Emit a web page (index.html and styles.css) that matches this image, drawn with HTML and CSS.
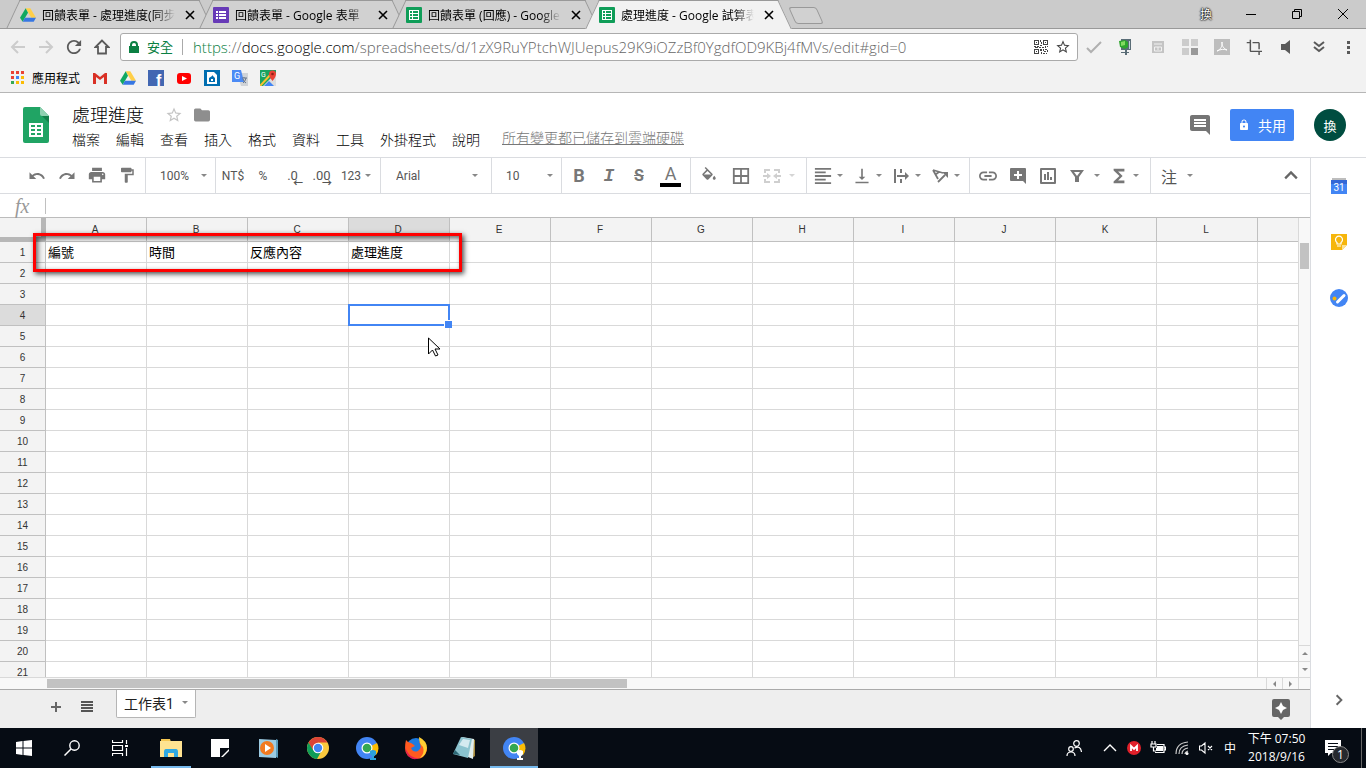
FILE: index.html
```html
<!DOCTYPE html>
<html lang="zh-Hant">
<head>
    <meta charset="UTF-8">
    <meta name="viewport" content="width=device-width, initial-scale=1.0">
    <title>處理進度 - Google 試算表</title>
    <link rel="stylesheet" href="styles.css">
</head>
<body>

<!-- shared icons -->
<svg class="sprite" aria-hidden="true">
    <symbol id="drive" viewBox="0 0 24 24">
        <path fill="#ffcf48" d="M8.5 2h7L24 16h-7z"/>
        <path fill="#11a861" d="M8.5 2L12 8.5 4 22 0 16z"/>
        <path fill="#3777e3" d="M7.5 16H24l-3.5 6H4z"/>
    </symbol>
    <symbol id="sheet" viewBox="0 0 16 16">
        <rect width="16" height="16" rx="1" fill="#0f9d58"/>
        <path fill="#fff" fill-rule="evenodd" d="M3 3h10v10H3zM4 4v2h2V4zm3 0v2h5V4zM4 7v2h2V7zm3 0v2h5V7zm-3 3v2h2v-2zm3 0v2h5v-2z"/>
    </symbol>
    <symbol id="form" viewBox="0 0 16 16">
        <rect width="16" height="16" rx="1" fill="#673ab7"/>
        <path fill="#fff" d="M3 4h2v2H3zm3 0h7v2H6zM3 7h2v2H3zm3 0h7v2H6zm-3 3h2v2H3zm3 0h7v2H6z"/>
    </symbol>
    <symbol id="close" viewBox="0 0 10 10">
        <path d="M1 1l8 8M9 1L1 9" stroke="currentColor" stroke-width="1.6"/>
    </symbol>
    <symbol id="star" viewBox="0 0 24 24">
        <path fill="currentColor" d="M22 9.24l-7.19-.62L12 2 9.19 8.63 2 9.24l5.46 4.73L5.82 21 12 17.27 18.18 21l-1.63-7.03L22 9.24zM12 15.4l-3.76 2.27 1-4.28-3.32-2.88 4.38-.38L12 6.1l1.71 4.04 4.38.38-3.32 2.88 1 4.28L12 15.4z"/>
    </symbol>
    <symbol id="lock" viewBox="0 0 24 24">
        <path fill="currentColor" fill-rule="evenodd" d="M18 8h-1V6c0-2.76-2.24-5-5-5S7 3.24 7 6v2H6c-1.1 0-2 .9-2 2v10c0 1.1.9 2 2 2h12c1.1 0 2-.9 2-2V10c0-1.1-.9-2-2-2zm-6 9c-1.1 0-2-.9-2-2s.9-2 2-2 2 .9 2 2-.9 2-2 2zm3.1-9H8.900V6c0-1.710 1.390-3.100 3.100-3.100s3.100 1.390 3.100 3.100z"/>
    </symbol>
    <symbol id="solid-lock" viewBox="0 0 12 12">
        <path fill="currentColor" fill-rule="evenodd" d="M2 5V4a4 4 0 0 1 8 0v1h1v7H1V5zm2 0h4V4a2 2 0 0 0-4 0z"/>
    </symbol>
    <symbol id="profile-chrome" viewBox="0 0 24 24">
        <circle cx="12" cy="12" r="11" fill="#4285f4"/>
        <path fill="#fbbc05" d="M12 12l10-5a11 11 0 0 1-1 12z"/>
        <circle cx="12" cy="12" r="5.5" fill="#fff"/>
        <circle cx="12" cy="12" r="4.3" fill="#34a853"/>
        <path fill="currentColor" d="M15 15q3-2 6 0v3q-1 2-2 2v2h2v2h-6v-2h2v-2q-1-1-2-2z"/>
    </symbol>
</svg>

<div class="tabstrip">
    <div class="tab">
        <svg class="favicon"><use href="#drive"/></svg>
        <span class="tab-title">回饋表單 - 處理進度(同步)</span>
        <button class="tab-close" aria-label="關閉分頁"><svg><use href="#close"/></svg></button>
    </div>
    <div class="tab">
        <svg class="favicon"><use href="#form"/></svg>
        <span class="tab-title">回饋表單 - Google 表單</span>
        <button class="tab-close" aria-label="關閉分頁"><svg><use href="#close"/></svg></button>
    </div>
    <div class="tab">
        <svg class="favicon"><use href="#sheet"/></svg>
        <span class="tab-title">回饋表單 (回應) - Google 試算表</span>
        <button class="tab-close" aria-label="關閉分頁"><svg><use href="#close"/></svg></button>
    </div>
    <div class="tab active">
        <svg class="favicon"><use href="#sheet"/></svg>
        <span class="tab-title">處理進度 - Google 試算表</span>
        <button class="tab-close" aria-label="關閉分頁"><svg><use href="#close"/></svg></button>
    </div>
    <button class="new-tab" aria-label="新增分頁"></button>
    <div class="window-buttons">
        <span class="profile">換</span>
        <button aria-label="最小化"><svg viewBox="0 0 10 10"><path d="M0 5.500h10" stroke="#000"/></svg></button>
        <button aria-label="還原"><svg viewBox="0 0 10 10"><path d="M.5 2.500h7v7h-7zM2.500 2.500v-2h7v7h-2" fill="none" stroke="#000"/></svg></button>
        <button aria-label="關閉"><svg viewBox="0 0 10 10"><path d="M0 0l10 10M10 0L0 10" stroke="#000"/></svg></button>
    </div>
</div>

<div class="navbar">
    <div class="nav-buttons">
        <button class="off" aria-label="上一頁"><svg viewBox="0 0 16 16"><path d="M15 8H2M8 2L2 8l6 6" fill="none" stroke="currentColor" stroke-width="2"/></svg></button>
        <button class="off" aria-label="下一頁"><svg viewBox="0 0 16 16"><path d="M1 8h13M8 2l6 6-6 6" fill="none" stroke="currentColor" stroke-width="2"/></svg></button>
        <button aria-label="重新載入"><svg viewBox="3 3 18 18"><path fill="currentColor" d="M17.650 6.350C16.200 4.900 14.210 4 12 4c-4.420 0-7.990 3.580-7.990 8s3.570 8 7.990 8c3.730 0 6.840-2.550 7.730-6h-2.080c-.82 2.330-3.040 4-5.650 4-3.310 0-6-2.690-6-6s2.690-6 6-6c1.660 0 3.140.69 4.220 1.780L13 11h7V4z"/></svg></button>
        <button aria-label="首頁"><svg viewBox="0 0 16 16"><path d="M8 1.500L1.500 8H4v6.500h8V8h2.500z" fill="none" stroke="currentColor" stroke-width="1.800"/></svg></button>
    </div>
    <div class="omnibox">
        <svg class="url-lock"><use href="#solid-lock"/></svg>
        <span class="secure">安全</span>
        <span class="url"><span class="scheme">https</span>://<span class="host">docs.google.com</span>/spreadsheets/d/1zX9RuYPtchWJUepus29K9iOZzBf0YgdfOD9KBj4fMVs/edit#gid=0</span>
        <svg class="qr" viewBox="0 0 14 14"><path fill="#444" fill-rule="evenodd" d="M0 0h5v5H0zm1 1v3h3V1zM9 0h5v5H9zm1 1v3h3V1zM0 9h5v5H0zm1 1v3h3v-3zM2 2h1v1H2zm9 0h1v1h-1zm-9 9h1v1H2zM6 0h1v2H6zm1 2h1v2H7zM6 5h2v1H6zM0 6h2v1H0zm3 0h2v1H3zm2 1h2v1H5zm3 0h2v1H8zm3-1h1v2h-1zm2 0h1v1h-1zM1 8h3v-1H1zm5 1h2v2H6zm1 3h1v2H7zm2-3h1v2H9zm2 0h2v1h-2zm2 1h1v2h-1zm-3 1h2v1h-2zm-1 2h2v1H9zm3 0h1v1h-1z"/></svg>
        <button class="bookmark-star" aria-label="加入書籤"><svg><use href="#star"/></svg></button>
    </div>
    <div class="extensions">
        <svg viewBox="0 0 16 16"><path d="M1 9l4 4L15 3" fill="none" stroke="#b0b0b0" stroke-width="2"/></svg>
        <svg viewBox="0 0 16 16"><path fill="#5a6d77" d="M3 0h10v11H9v2h2v1H9v2H7v-2H3v-1h4v-2H3z"/><path fill="#2ea52d" d="M1 2l6-1 3 2v5l-3 2-5-2z"/><path fill="#83db61" d="M3 3l4-1v4L3 7z"/><path fill="#c2d2da" d="M11 2h1v8h-1z"/></svg>
        <svg viewBox="0 0 16 16"><path fill="#c4c4c4" d="M2 2h12v12H2z"/><path d="M4 5h8M4.500 8h7v4h-7zM8 8v3" fill="none" stroke="#f2f2f2"/></svg>
        <svg viewBox="0 0 16 16"><path fill="#ccc" d="M0 0h7v7H0zm9 0h7v7H9zM0 9h7v7H0z"/><path fill="#999" d="M9 9h7v7H9z"/></svg>
        <svg viewBox="0 0 16 16"><path fill="#bdbdbd" d="M0 0h16v16H0z"/><path d="M8 3c-1 3 2 7 5 8-3-1-6-1-10 1 3-1 6-5 5-9z" fill="none" stroke="#fff"/></svg>
        <svg viewBox="0 1 22 22"><path fill="#555" d="M17 15h2V7c0-1.100-.9-2-2-2H9v2h8zM7 17V2H5v3H1v2h4v10c0 1.100.9 2 2 2h10v4h2v-4h4v-2z"/></svg>
        <svg viewBox="0 0 16 16"><path fill="#5a5a5a" d="M3 5h4l5-4v14l-5-4H3z"/></svg>
        <svg viewBox="1 0 16 16"><path d="M5 3l5 4 5-4M5 8l5 4 5-4" fill="none" stroke="#5a5a5a" stroke-width="2"/></svg>
        <svg viewBox="0 0 16 16"><path fill="#5a5a5a" d="M5 2h3v3H5zm0 5h3v3H5zm0 5h3v3H5z"/></svg>
    </div>
</div>

<div class="bookmarks">
    <a href="#" class="apps"><svg viewBox="0 0 14 14"><path fill="#ea4335" d="M0 0h3v3H0zm5 0h3v3H5zm5 0h3v3h-3zM0 5h3v3H0z"/><path fill="#4285f4" d="M5 5h3v3H5z"/><path fill="#fbbc05" d="M10 5h3v3h-3zm-5 5h3v3H5zm5 0h3v3h-3z"/><path fill="#34a853" d="M0 10h3v3H0z"/></svg>應用程式</a>
    <a href="#" aria-label="Gmail"><svg viewBox="0 0 16 16"><path fill="#eee" d="M2 3h12v10H2z"/><path fill="#d93025" d="M1 3h2l5 4 5-4h2v11h-3V7L8 10 4 7v7H1z"/></svg></a>
    <a href="#" aria-label="雲端硬碟"><svg><use href="#drive"/></svg></a>
    <a href="#" aria-label="Facebook"><svg viewBox="0 0 16 16"><path fill="#4267b2" d="M0 0h16v16H0z"/><text x="8" y="16" fill="#fff" font-family="Liberation Sans" font-weight="bold" font-size="16">f</text></svg></a>
    <a href="#" aria-label="YouTube"><svg viewBox="0 0 16 16"><rect x="1" y="3" width="14" height="11" rx="3" fill="#f00"/><path fill="#fff" d="M6 6l5 2.500L6 11z"/></svg></a>
    <a href="#" aria-label="部落格"><svg viewBox="0 0 16 16"><path fill="#006eb0" d="M0 0h16v16H0z"/><path fill="#fff" d="M3 2h7l3 3v9H3z"/><path fill="#006eb0" d="M5 8l3-2V5l3 3v4H5zm2 1v2h2V9z"/></svg></a>
    <a href="#" aria-label="翻譯"><svg viewBox="0 0 16 16"><path fill="#d0d3d7" d="M5 3h11v13H9z"/><path fill="#4c8bf5" d="M0 0h9l3 12H0z"/><text x="2" y="9" fill="#fff" font-family="Roboto" font-size="9">G</text><path d="M10 8h5m-3-1v1m2 0q-1 4-3 5m0-4q1 3 3 4" fill="none" stroke="#67758a"/></svg></a>
    <a href="#" aria-label="地圖"><svg viewBox="0 0 16 16"><path fill="#1aa260" d="M0 0h16v16H0z"/><path fill="#ddd" d="M3 16L16 3v13z"/><path fill="#4285f4" d="M4 16l5-5 5 5z"/><path d="M0 16L12 3" stroke="#fbc02d" stroke-width="2"/><path fill="#ea4335" d="M9 4a3.500 3.500 0 0 1 7 0q0 3-3.500 7Q9 7 9 4z"/><circle cx="12.500" cy="4" r="1.300" fill="#8e2018"/><text x="1" y="7" fill="#fff" font-family="Roboto" font-size="7">G</text></svg></a>
</div>

<header class="doc-header">
    <a href="#" class="logo" aria-label="試算表首頁"><svg viewBox="0 0 26 36"><path fill="#20a464" d="M2 0h15l9 9v25q0 2-2 2H2q-2 0-2-2V2Q0 0 2 0z"/><path fill="#8fd1b1" d="M17 0l9 9h-7q-2 0-2-2z"/><path fill="#13804a" d="M19 9h7v7z"/><path fill="#fff" fill-rule="evenodd" d="M6 16h14v14H6zm2 2v2h4v-2zm6 0v2h4v-2zm-6 4v2h4v-2zm6 0v2h4v-2zm-6 4v2h4v-2zm6 0v2h4v-2z"/></svg></a>
    <div class="doc-info">
        <div class="title-row">
            <h1>處理進度</h1>
            <button class="star-btn" aria-label="加上星號"><svg><use href="#star"/></svg></button>
            <button class="folder-btn" aria-label="移動"><svg viewBox="2 2 20 20"><path fill="currentColor" d="M10 4H4c-1.100 0-2 .9-2 2v12c0 1.100.9 2 2 2h16c1.100 0 2-.9 2-2V8c0-1.100-.9-2-2-2h-8z"/></svg></button>
        </div>
        <nav class="menu-row">
            <button>檔案</button>
            <button>編輯</button>
            <button>查看</button>
            <button>插入</button>
            <button>格式</button>
            <button>資料</button>
            <button>工具</button>
            <button>外掛程式</button>
            <button>說明</button>
            <a href="#" class="save-state">所有變更都已儲存到雲端硬碟</a>
        </nav>
    </div>
    <div class="doc-actions">
        <button class="comments" aria-label="留言"><svg viewBox="2 2 20 20"><path fill="currentColor" d="M22 4c0-1.100-.9-2-2-2H4c-1.100 0-2 .9-2 2v12c0 1.100.9 2 2 2h14l4 4zM18 14H6v-2h12zm0-3H6V9h12zm0-3H6V6h12z"/></svg></button>
        <button class="share"><svg><use href="#lock"/></svg>共用</button>
        <button class="avatar">換</button>
    </div>
</header>

<div class="workspace">
    <main class="editor">
        <div class="toolbar">
            <div class="group icons">
                <button aria-label="復原"><svg viewBox="0 0 24 24"><path d="M12.500 8c-2.650 0-5.050.99-6.900 2.600L2 7v9h9l-3.620-3.620c1.390-1.160 3.160-1.880 5.120-1.880 3.540 0 6.550 2.310 7.600 5.500l2.370-.78C21.080 11.030 17.150 8 12.500 8z"/></svg></button>
                <button aria-label="重做"><svg viewBox="0 0 24 24"><path d="M18.400 10.600C16.550 8.990 14.150 8 11.500 8c-4.650 0-8.580 3.030-9.960 7.220L3.900 16c1.050-3.190 4.050-5.500 7.600-5.500 1.950 0 3.730.72 5.120 1.880L13 16h9V7z"/></svg></button>
                <button aria-label="列印"><svg viewBox="1 2 22 22"><path d="M19 8H5c-1.660 0-3 1.340-3 3v6h4v4h12v-4h4v-6c0-1.660-1.340-3-3-3zm-3 11H8v-5h8zm3-7c-.55 0-1-.45-1-1s.45-1 1-1 1 .45 1 1-.45 1-1 1zm-1-9H6v4h12z"/></svg></button>
                <button aria-label="套用格式"><svg viewBox="0 1 24 24"><path d="M18 4V3c0-.55-.45-1-1-1H5c-.55 0-1 .45-1 1v4c0 .55.45 1 1 1h12c.55 0 1-.45 1-1V6h1v4H9v11c0 .55.45 1 1 1h2c.55 0 1-.45 1-1v-9h8V4z"/></svg></button>
            </div>
            <div class="group">
                <label class="picker zoom"><select aria-label="縮放"><option>100%</option></select></label>
            </div>
            <div class="group numbers">
                <button>NT$</button>
                <button>%</button>
                <button class="dec less">.0</button>
                <button class="dec more">.00</button>
                <button class="formats">123<i class="arrow"></i></button>
            </div>
            <div class="group">
                <label class="picker font"><select aria-label="字型"><option>Arial</option></select></label>
            </div>
            <div class="group">
                <label class="picker size"><select aria-label="字型大小"><option>10</option></select></label>
            </div>
            <div class="group text-style">
                <button class="bold">B</button>
                <button class="italic">I</button>
                <button class="strike">S</button>
                <button class="color"><span>A</span></button>
            </div>
            <div class="group cell-style">
                <button aria-label="填滿色彩"><svg viewBox="0 0 24 24"><path d="M16.560 8.940L7.620 0 6.210 1.410l2.380 2.380-5.150 5.150c-.59.59-.59 1.540 0 2.120l5.500 5.500c.59.59 1.540.59 2.120 0l5.500-5.500c.59-.58.59-1.530 0-2.120zM5.210 10L10 5.210 14.790 10zM19 11.500s-2 2.170-2 3.500c0 1.100.9 2 2 2s2-.9 2-2c0-1.330-2-3.500-2-3.500z"/></svg></button>
                <button aria-label="框線"><svg viewBox="2 2 20 20"><path d="M3 3v18h18V3zm8 16H5v-6h6zm0-8H5V5h6zm8 8h-6v-6h6zm0-8h-6V5h6z"/></svg></button>
                <button class="dd wide off" aria-label="合併儲存格"><svg viewBox="0 0 18 18"><path d="M1 2h6v2H3v2H1zm10 0h6v4h-2V4h-4zM1 12h2v2h4v2H1zm14 0h2v4h-6v-2h4zM0 8h4V6l4 3-4 3v-2H0zm18 0h-4V6l-4 3 4 3v-2h4z"/></svg><i class="arrow"></i></button>
            </div>
            <div class="group aligns">
                <button class="dd" aria-label="水平對齊"><svg viewBox="2 2 20 20"><path d="M15 15H3v2h12zm0-8H3v2h12zM3 13h18v-2H3zm0 8h18v-2H3zM3 3v2h18V3z"/></svg><i class="arrow"></i></button>
                <button class="dd" aria-label="垂直對齊"><svg viewBox="1 1 22 22"><path d="M16 13h-3V3h-2v10H8l4 4zM4 19v2h16v-2z"/></svg><i class="arrow"></i></button>
                <button class="dd" aria-label="文字換行"><svg viewBox="0 0 18 18"><path d="M2 2h2v14H2zm6 0h2v4H8zm0 10h2v4H8zM5 8h8V5l4 4-4 4v-3H5z"/></svg><i class="arrow"></i></button>
                <button class="dd" aria-label="文字旋轉"><svg viewBox="0 0 18 18"><path d="M2 3l10 3M2 3l5 9M4.500 7.500L8 5M7 15l7-7" fill="none" stroke="#777" stroke-width="1.800"/><path d="M11 5h6v6z"/></svg><i class="arrow"></i></button>
            </div>
            <div class="group insert">
                <button aria-label="插入連結"><svg viewBox="2 2 20 20"><path d="M3.900 12c0-1.710 1.390-3.100 3.100-3.100h4V7H7c-2.760 0-5 2.240-5 5s2.240 5 5 5h4v-1.900H7c-1.710 0-3.100-1.390-3.100-3.100zM8 13h8v-2H8zm9-6h-4v1.900h4c1.710 0 3.100 1.390 3.100 3.100s-1.390 3.100-3.100 3.100h-4V17h4c2.760 0 5-2.240 5-5s-2.240-5-5-5z"/></svg></button>
                <button aria-label="插入留言"><svg viewBox="0 0 18 18"><path fill-rule="evenodd" d="M2 1h14q1 0 1 1v15l-3-3H2q-1 0-1-1V2q0-1 1-1zm6 3v3H5v2h3v3h2V9h3V7h-3V4z"/></svg></button>
                <button aria-label="插入圖表"><svg viewBox="0 0 18 18"><path fill-rule="evenodd" d="M2 1h14q1 0 1 1v14q0 1-1 1H2q-1 0-1-1V2q0-1 1-1zm1 2v12h12V3zm2 4h2v6H5zm3-2h2v8H8zm3 5h2v3h-2z"/></svg></button>
                <button class="dd wide" aria-label="篩選器"><svg viewBox="0 0 18 18"><path fill-rule="evenodd" d="M2 3h14l-5 7v5H7v-5zm4 2l3 4 3-4z"/></svg><i class="arrow"></i></button>
                <button class="dd" aria-label="函式"><svg viewBox="2 2 20 20"><path d="M18 4H6v2l6.500 6L6 18v2h12v-3h-7l5-5-5-5h7z"/></svg><i class="arrow"></i></button>
            </div>
            <div class="group last">
                <button class="ime">注<i class="arrow"></i></button>
            </div>
            <button class="collapse" aria-label="隱藏選單"><svg viewBox="0 0 12 12"><path d="M1 8l5-5 5 5" fill="none" stroke="#666" stroke-width="2"/></svg></button>
        </div>

        <div class="formula-bar">
            <label for="formula">fx</label>
            <input type="text" id="formula">
        </div>

        <div class="grid-area">
            <div class="grid-view">
                <table class="grid">
                    <thead><tr id="letters"><th class="corner"></th></tr></thead>
                    <tbody id="rows"></tbody>
                </table>
                <div class="red-frame"></div>
                <svg class="pointer" viewBox="0 0 12 20"><path d="M.5 1v16l4-4 3 6 2.500-1-3-6h5z" fill="#fff" stroke="#000"/></svg>
            </div>
            <div class="vscroll">
                <div class="vtrack"><div class="vthumb"></div></div>
                <button class="up" aria-label="向上捲動"></button>
                <button class="down" aria-label="向下捲動"></button>
            </div>
        </div>
        <div class="hscroll">
            <div class="htrack"><div class="hthumb"></div></div>
            <button class="left" aria-label="向左捲動"></button>
            <button class="right" aria-label="向右捲動"></button>
            <span class="scroll-corner"></span>
        </div>

        <div class="sheet-bar">
            <button aria-label="新增工作表"><svg viewBox="0 0 12 12"><path d="M6 1v10M1 6h10" stroke="#666" stroke-width="2"/></svg></button>
            <button aria-label="所有工作表"><svg viewBox="0 0 12 12"><path d="M0 1h12M0 4h12M0 7h12M0 10h12" stroke="#555" stroke-width="2"/></svg></button>
            <button class="sheet-tab">工作表1<i class="arrow"></i></button>
            <button class="explore" aria-label="探索"><svg viewBox="0 0 18 21"><path fill="#666" d="M2 0h14q2 0 2 2v14q0 2-2 2h-4l-3 3-3-3H2q-2 0-2-2V2Q0 0 2 0z"/><path fill="#fff" d="M9 3l2 4 4 2-4 2-2 4-2-4-4-2 4-2z"/></svg></button>
        </div>
    </main>

    <aside class="side-panel">
        <button aria-label="日曆"><svg viewBox="0 0 18 18"><path fill="#bdbdbd" d="M2 1h14v3H2z"/><path fill="#3367d6" d="M1 3h16v4H1z"/><path fill="#4285f4" d="M1 7h16v10H1z"/><text x="9" y="14" text-anchor="middle" fill="#fff" font-family="Roboto" font-size="10">31</text></svg></button>
        <button aria-label="Keep"><svg viewBox="0 0 18 18"><path fill="#f6b60b" d="M1 1h16v11l-5 5H1z"/><path fill="#fde293" d="M17 12l-5 5v-5z"/><path d="M7 11V9.500a3.500 3.500 0 1 1 4 0V11zM7 13h4" fill="none" stroke="#fff" stroke-width="1.200"/></svg></button>
        <button aria-label="Tasks"><svg viewBox="0 0 18 18"><circle cx="9" cy="9" r="9" fill="#4285f4"/><circle cx="4.500" cy="9.500" r="2" fill="#f6b60b"/><path d="M7.500 13L14 6.500" stroke="#fff" stroke-width="3" stroke-linecap="round"/></svg></button>
        <button class="panel-toggle" aria-label="隱藏側邊面板"><svg viewBox="0 0 10 10"><path d="M3 1l4 4-4 4" fill="none" stroke="#666" stroke-width="1.600"/></svg></button>
    </aside>
</div>

<footer class="taskbar">
    <div class="system">
        <button aria-label="開始"><svg class="s16" viewBox="0 0 16 16"><path fill="#fff" d="M0 2l6.500-1v6.500H0zM7.500 1L16 0v7.500H7.500zM0 8.500h6.500V15L0 14zM7.500 8.500H16V16l-8.500-1z"/></svg></button>
        <button aria-label="搜尋"><svg class="s16" viewBox="0 0 16 16"><circle cx="10.500" cy="5.500" r="4.700" fill="none" stroke="#fff" stroke-width="1.400"/><path d="M7 9L.5 15.500" stroke="#fff" stroke-width="1.500"/></svg></button>
        <button aria-label="工作檢視"><svg class="s16" viewBox="0 0 16 16"><path d="M.5 0v2.500h10V0M.5 5.500h10v5H.5zM.5 16v-2.500h10V16M14.500 0v4M14.500 8v8" fill="none" stroke="#fff" stroke-width="1.200"/><path fill="#fff" d="M13 5h3v2h-3z"/></svg></button>
    </div>
    <div class="programs">
        <button class="running" aria-label="檔案總管"><svg viewBox="0 0 24 24"><path fill="#f5c752" d="M2 3h9l1 3h-10z"/><path fill="#ffe391" d="M1 5h22v16H1z"/><path fill="#2fa8e2" d="M5 21v-5q0-3 2-3h10q2 0 2 3v5h-4v-4H9v4z"/></svg></button>
        <button aria-label="便利貼"><svg viewBox="0 0 24 24"><path fill="#fff" d="M3 3h18v9h-9v9H3z"/><path fill="#fff" d="M13 21l8-8v2l-6 6z"/></svg></button>
        <button aria-label="媒體播放器"><svg viewBox="0 0 24 24"><path fill="#9ccbe2" d="M2 3l17 1v18L2 21z"/><path fill="#5b9dbc" d="M19 3l2 1v18l-2-1z"/><circle cx="10" cy="12" r="7" fill="#f27a20"/><path fill="#fff" d="M8 8l6 4-6 4z"/></svg></button>
        <button aria-label="Chrome"><svg viewBox="0 0 24 24"><circle cx="12" cy="12" r="11" fill="#fbc93d"/><path fill="#db4437" d="M2.500 6.500A11 11 0 0 1 21.500 6.500H12L7 15z"/><path fill="#0f9d58" d="M2.500 6.500A11 11 0 0 0 11 23l5-9H7z"/><circle cx="12" cy="12" r="5.300" fill="#fff"/><circle cx="12" cy="12" r="4.200" fill="#4285f4"/></svg></button>
        <button class="blue-user" aria-label="Chrome 使用者 1"><svg><use href="#profile-chrome"/></svg></button>
        <button aria-label="Firefox"><svg viewBox="0 0 24 24"><circle cx="12" cy="12" r="10" fill="#1d7be0"/><path fill="#ff5a1f" d="M2 4q2 3 5 3 2 1 4 3l-4 2q2 5 7 3 5-4 1-9 8 2 8 8-2 9-11 9Q1 22 1 12q0-4 1-8z"/><path fill="#ffcf32" d="M15 1q8 4 8 11-1 8-7 10 5-5 3-11-4-3-4-10z"/><path fill="#e31b55" d="M2 5q-2 10 5 15 5 3 9 2-10 4-14-6-1-5 0-11z"/></svg></button>
        <button aria-label="記事本"><svg viewBox="0 0 24 24"><path fill="#a78b3d" d="M20 3l2 1v16l-3 2z"/><path fill="#e1eeee" d="M9 1l12 2-1 20-5-2z"/><path fill="#8bc3cf" d="M8 1l11 2-4 19L0 18z"/><path fill="#d4eaf0" d="M10 3l7 1-2 8-9-3z"/><path fill="#2c6876" d="M2 14l5 5-7-1z"/></svg></button>
        <button class="running current" aria-label="Chrome 使用者 2"><svg><use href="#profile-chrome"/></svg></button>
    </div>
    <div class="tray">
        <button class="people" aria-label="連絡人"><svg class="s16" viewBox="0 0 16 16"><g fill="none" stroke="#fff" stroke-width="1.200"><circle cx="10.500" cy="3.500" r="2.800"/><circle cx="5" cy="9" r="2.300"/><path d="M1 16q0-4 4-4t4 4M8.500 8q6-3 7 4"/></g></svg></button>
        <button aria-label="顯示隱藏圖示"><svg viewBox="0 0 14 14"><path d="M1 10l6-6 6 6" fill="none" stroke="#fff" stroke-width="1.400"/></svg></button>
        <button aria-label="MEGA"><svg viewBox="0 0 14 14"><circle cx="7" cy="7" r="7" fill="#e0202a"/><path d="M4 10V5l3 3 3-3v5" fill="none" stroke="#fff" stroke-width="1.800"/></svg></button>
        <button aria-label="電池"><svg class="s16" viewBox="0 0 16 16"><path d="M2 1v3M5 1v3M1 4h5v3H1zM3.500 7v4H6M7 4.500h7v8H5M14.500 7h1v3h-1" fill="none" stroke="#fff" stroke-width="1.200"/><path fill="#fff" d="M7 6h6v5H6V8h1z"/></svg></button>
        <button aria-label="網路"><svg viewBox="0 0 14 14"><path d="M1 13Q1 2 13 1M4 13q0-8 9-9M7 13q0-5 6-6M10 13q0-2 3-3" fill="none" stroke="#ccc" stroke-width="1.200"/><circle cx="12" cy="12.500" r="1.500" fill="#fff"/></svg></button>
        <button aria-label="音量"><svg viewBox="0 0 14 14"><path d="M.5 5h2L6 2v10L2.500 9h-2zM9 5l4 4M13 5L9 9" fill="none" stroke="#fff" stroke-width="1.100"/></svg></button>
        <button class="lang">中</button>
        <div class="clock"><span>下午 07:50</span><span>2018/9/16</span></div>
        <button class="notify" aria-label="通知"><svg class="s16" viewBox="0 0 16 16"><path fill="#fff" d="M0 0h16v13H6l-3 3v-3H0z"/><path d="M3 3.500h10M3 6.500h10M3 9.500h7" stroke="#060c14"/></svg><span class="badge">1</span></button>
        <span class="show-desktop"></span>
    </div>
</footer>

<script>
    var headings = ['編號', '時間', '反應內容', '處理進度'];
    // the last column is cut by the scrollbar, so it gets no letter
    var letters = ['A', 'B', 'C', 'D', 'E', 'F', 'G', 'H', 'I', 'J', 'K', 'L', ''];
    var letterRow = document.getElementById('letters');
    var rows = document.getElementById('rows');

    letters.forEach(function (letter) {
        var th = document.createElement('th');
        th.textContent = letter;
        if (letter === 'D') th.className = 'picked';
        letterRow.appendChild(th);
    });

    for (var r = 1; r <= 21; r++) {
        var tr = rows.insertRow();
        var th = document.createElement('th');
        th.textContent = r;
        if (r === 4) th.className = 'picked';
        tr.appendChild(th);
        for (var c = 0; c < letters.length; c++) {
            var td = tr.insertCell();
            if (r === 1 && headings[c]) td.textContent = headings[c];
            if (r === 4 && c === 3) td.className = 'selected';
        }
    }
</script>

</body>
</html>
```
FILE: styles.css
```css
* {
    box-sizing: border-box;
}

body {
    margin: 0;
    height: 100vh;
    display: flex;
    flex-direction: column;
    overflow: hidden;
    background-color: #fff;
    font-family: "Open Sans", "Noto Sans CJK TC", sans-serif;
    font-size: 12px;
    color: #000;
}

button {
    display: flex;
    align-items: center;
    justify-content: center;
    padding: 0;
    border: none;
    background: none;
    font: inherit;
    color: inherit;
    cursor: pointer;
}

a {
    color: inherit;
    text-decoration: none;
}

svg {
    display: block;
    flex: none;
}

.sprite {
    display: none;
}

/* browser tabs */
.tabstrip {
    flex: none;
    display: flex;
    height: 29px;
    padding-left: 13px;
    background-color: #cbcbcb;
    border-bottom: 1px solid #999;
}

.tab {
    position: relative;
    z-index: 0;
    display: flex;
    align-items: center;
    width: 193px;
    height: 28px;
    padding: 2px 11px 0 7px;
}

.tab::before,
.tab::after {
    content: "";
    position: absolute;
    z-index: -1;
    top: 0;
    bottom: 0;
    width: 60%;
    background-color: #d1d1d1;
    border-top: 1px solid #999;
}

.tab::before {
    left: 0;
    border-left: 1px solid #999;
    transform: skewX(-25deg);
}

.tab::after {
    right: 0;
    border-right: 1px solid #999;
    transform: skewX(25deg);
}

.tab.active {
    height: 29px;
    padding-top: 1px;
    z-index: 1;
}

.tab.active::before,
.tab.active::after {
    background-color: #f2f2f2;
}

.favicon {
    width: 16px;
    height: 16px;
    margin-right: 6px;
}

.tab-title {
    flex: 1;
    margin-right: 10px;
    overflow: hidden;
    white-space: nowrap;
    -webkit-mask-image: linear-gradient(to left, transparent, #000 20px);
    mask-image: linear-gradient(to left, transparent, #000 20px);
}

.tab-close svg {
    width: 10px;
    height: 10px;
}

.new-tab {
    width: 28px;
    height: 17px;
    margin: 7px 0 0 7px;
    border: 1px solid #999;
    border-radius: 3px;
    background-color: #d1d1d1;
    transform: skewX(24deg);
}

.window-buttons {
    display: flex;
    align-items: center;
    margin-left: auto;
}

.window-buttons button {
    width: 46px;
    height: 28px;
}

.window-buttons svg {
    width: 10px;
    height: 10px;
}

.profile {
    margin-right: 16px;
    color: #fff;
    text-shadow: 0 0 1px #000, 0 0 2px #000, 0 0 2px #000;
}

/* address row */
.navbar {
    flex: none;
    display: flex;
    align-items: center;
    height: 36px;
    padding: 0 8px 0 10px;
    background-color: #f2f2f2;
}

.nav-buttons {
    display: flex;
    gap: 12px;
    margin-right: 10px;
    color: #5a5a5a;
}

.nav-buttons .off {
    color: #ccc;
}

.nav-buttons svg,
.extensions svg {
    width: 16px;
    height: 16px;
}

.omnibox {
    flex: 1;
    display: flex;
    align-items: center;
    height: 28px;
    padding: 0 6px 0 7px;
    border: 1px solid #aaa;
    border-radius: 3px;
    background-color: #fff;
}

.url-lock {
    width: 12px;
    height: 12px;
    color: #0b8043;
}

.secure {
    margin-left: 7px;
    padding-right: 9px;
    border-right: 1px solid #aaa;
    font-size: 13px;
    line-height: 16px;
    color: #0b8043;
}

.url {
    flex: 1;
    margin-left: 10px;
    font-size: 15px;
    font-weight: 300;
    white-space: nowrap;
    color: #666;
}

.scheme {
    color: #0b8043;
}

.host {
    color: #000;
}

.qr {
    width: 14px;
    height: 14px;
    margin-right: 7px;
}

.bookmark-star svg {
    width: 16px;
    height: 16px;
    color: #444;
}

.extensions {
    display: flex;
    gap: 16px;
    margin-left: 8px;
}

.bookmarks {
    flex: none;
    display: flex;
    align-items: center;
    gap: 12px;
    height: 28px;
    padding: 0 0 2px 11px;
    background-color: #f2f2f2;
    border-bottom: 1px solid #b6b6b6;
}

.bookmarks svg {
    width: 16px;
    height: 16px;
}

.bookmarks .apps {
    display: flex;
    align-items: center;
    gap: 7px;
}

.bookmarks .apps svg {
    width: 14px;
    height: 14px;
}

/* document header */
.doc-header {
    flex: none;
    display: flex;
    height: 65px;
    padding: 0 20px 0 23px;
    border-bottom: 1px solid #dadce0;
}

.logo svg {
    width: 26px;
    height: 36px;
    margin: 14px 23px 0 0;
}

.title-row {
    display: flex;
    align-items: center;
    height: 26px;
    margin-top: 9px;
}

h1 {
    margin: 0 20px 0 0;
    font-size: 18px;
    font-weight: 300;
    line-height: 26px;
}

.title-row svg {
    width: 18px;
    height: 18px;
}

.star-btn {
    margin-right: 10px;
    color: #c4c4c4;
}

.star-btn svg {
    width: 20px;
}

.folder-btn {
    color: #8e8e8e;
}

.folder-btn svg {
    width: 16px;
}

.menu-row {
    display: flex;
    gap: 16px;
    font-size: 14px;
    font-weight: 300;
    line-height: 24px;
}

.save-state {
    margin-left: 6px;
    line-height: 20px;
    color: #777;
    text-decoration: underline;
}

.doc-actions {
    display: flex;
    align-items: center;
    gap: 20px;
    margin-left: auto;
}

.comments svg {
    width: 20px;
    height: 20px;
    color: #757575;
}

.share {
    width: 64px;
    height: 32px;
    gap: 8px;
    border-radius: 2px;
    background-color: #4285f4;
    color: #fff;
    font-size: 14px;
}

.share svg {
    width: 12px;
    height: 12px;
}

.avatar {
    width: 32px;
    height: 32px;
    border-radius: 50%;
    background-color: #004d40;
    color: #fff;
    font-size: 13px;
}

/* editor */
.workspace {
    flex: 1;
    display: flex;
    min-height: 0;
}

.editor {
    flex: 1;
    display: flex;
    flex-direction: column;
    min-width: 0;
}

.toolbar {
    flex: none;
    display: flex;
    height: 36px;
    border-bottom: 1px solid #dadce0;
    font-family: Roboto, "Noto Sans CJK TC", sans-serif;
    color: #555;
}

.group {
    display: flex;
    border-right: 1px solid #dadce0;
}

.group button {
    width: 30px;
}

.group svg {
    width: 18px;
    height: 18px;
    fill: #777;
}

.group.icons {
    padding: 0 3px 0 22px;
}

.arrow {
    flex: none;
    width: 0;
    border: 3px solid transparent;
    border-top-color: #888;
    border-bottom: none;
}

.picker {
    display: flex;
    align-items: center;
    padding: 0 8px 0 14px;
}

.picker::after {
    content: "";
    border: 3px solid transparent;
    border-top-color: #888;
    border-bottom: none;
}

.picker select {
    flex: 1;
    appearance: none;
    padding: 0;
    border: none;
    background: none;
    font: inherit;
    color: inherit;
}

.zoom {
    width: 69px;
}

.font {
    width: 110px;
    padding: 0 13px 0 15px;
}

.size {
    width: 69px;
}

.group.numbers {
    padding: 0 4px 0 2px;
}

.group.numbers .dec {
    position: relative;
    width: 29px;
    font-size: 13px;
}

.dec::after {
    content: "←";
    position: absolute;
    right: 4px;
    bottom: 3px;
    font-size: 10px;
    font-weight: bold;
}

.dec.more::after {
    content: "→";
}

.group.numbers .formats {
    width: 40px;
    gap: 4px;
}

.group.text-style {
    padding: 0 3px 0 2px;
}

.text-style button {
    font-size: 18px;
    color: #777;
}

.text-style .bold,
.text-style .strike {
    font-weight: bold;
}

.text-style .italic {
    font-family: "Liberation Mono", monospace;
    font-weight: bold;
    font-style: italic;
}

.text-style .strike {
    font-size: 16px;
    text-decoration: line-through;
}

.text-style .color {
    width: 33px;
}

.color span {
    width: 21px;
    border-bottom: 4px solid #000;
    line-height: 18px;
}

.group.cell-style {
    padding: 0 4px 0 3px;
}

.cell-style button {
    margin-right: 2px;
}

.group .dd {
    width: 39px;
    gap: 5px;
}

.group .dd.wide {
    width: 42px;
    gap: 8px;
}

.dd.off {
    opacity: .35;
}

.group.aligns {
    padding: 0 4px 0 2px;
}

.group.insert {
    padding: 0 6px 0 3px;
}

.group.last {
    padding-left: 8px;
    border: none;
}

.group .ime {
    width: 36px;
    gap: 10px;
    font-size: 16px;
}

.collapse {
    margin: 0 12px 0 auto;
}

.collapse svg {
    width: 14px;
    height: 14px;
}

.formula-bar {
    flex: none;
    display: flex;
    align-items: center;
    height: 24px;
    border-bottom: 1px solid #bcbcbc;
}

.formula-bar label {
    width: 46px;
    padding-left: 15px;
    border-right: 1px solid #c0c0c0;
    font: italic 20px/16px "Liberation Serif", serif;
    color: #999;
}

.formula-bar input {
    flex: 1;
    border: none;
    outline: none;
}

.grid-area {
    flex: 1;
    display: flex;
    min-height: 0;
}

.grid-view {
    flex: 1;
    position: relative;
    min-width: 0;
    overflow: hidden;
}

.grid {
    width: 1359px;
    table-layout: fixed;
    border-collapse: separate;
    border-spacing: 0;
    font-family: "Liberation Sans", "Noto Sans CJK TC", sans-serif;
}

.grid th,
.grid td {
    width: 101px;
    height: 21px;
    padding: 2px 0 0;
    border: 0 solid #d9d9d9;
    border-width: 0 1px 1px 0;
    font-size: 13px;
    line-height: 18px;
    white-space: nowrap;
}

.grid td {
    padding-left: 2px;
}

.grid th {
    background-color: #f3f3f3;
    border-color: #c0c0c0;
    font-size: 10px;
    font-weight: normal;
    color: #333;
}

.grid thead th {
    height: 24px;
    padding: 0 2px 0 0;
}

.grid th:first-child {
    width: 46px;
}

.grid .corner {
    border: 0 solid #b7b7b7;
    border-width: 0 5px 5px 0;
}

.grid .picked {
    background-color: #dcdcdc;
}

.selected {
    position: relative;
}

.selected::before {
    content: "";
    position: absolute;
    inset: -1px;
    border: 2px solid #4285f4;
}

.selected::after {
    content: "";
    position: absolute;
    right: -3px;
    bottom: -3px;
    width: 7px;
    height: 7px;
    border: 1px solid #fff;
    border-width: 1px 0 0 1px;
    background-color: #4285f4;
}

.red-frame {
    position: absolute;
    left: 33px;
    top: 15px;
    width: 429px;
    height: 39px;
    border: 3px solid #f00;
    box-shadow: 2px 2px 5px rgba(0, 0, 0, .7), inset 2px 2px 5px rgba(0, 0, 0, .6);
}

.pointer {
    position: absolute;
    left: 428px;
    top: 119px;
    width: 12px;
    height: 20px;
}

/* scrollbars */
.vscroll {
    display: flex;
    flex-direction: column;
    width: 12px;
    background-color: #f8f8f8;
    border-left: 1px solid #d9d9d9;
}

.vtrack {
    flex: 1;
    padding: 25px 1px 0;
}

.vthumb {
    height: 26px;
    background-color: #c2c2c2;
}

.vscroll button {
    height: 16px;
    border-top: 1px solid #d9d9d9;
}

.vscroll button::before,
.hscroll button::before {
    content: "";
    border: 3px solid transparent;
}

.vscroll .up::before {
    border-bottom-color: #888;
    border-top: none;
}

.vscroll .down::before {
    border-top-color: #888;
    border-bottom: none;
}

.hscroll {
    flex: none;
    display: flex;
    height: 12px;
    background-color: #f8f8f8;
    border-top: 1px solid #d9d9d9;
}

.htrack {
    flex: 1;
    padding: 1px 0 0 47px;
}

.hthumb {
    width: 580px;
    height: 9px;
    background-color: #c2c2c2;
}

.hscroll button {
    width: 16px;
    border-left: 1px solid #d9d9d9;
}

.scroll-corner {
    width: 12px;
    border-left: 1px solid #d9d9d9;
}

.hscroll .left::before {
    border-right-color: #888;
    border-left: none;
}

.hscroll .right::before {
    border-left-color: #888;
    border-right: none;
}

.sheet-bar {
    flex: none;
    display: flex;
    align-items: center;
    height: 39px;
    padding: 0 20px 4px 40px;
    background-color: #eee;
    border-top: 1px solid #aaa;
}

.sheet-bar button {
    width: 31px;
}

.sheet-bar svg {
    width: 12px;
    height: 12px;
}

.sheet-bar .sheet-tab {
    align-self: flex-start;
    width: 80px;
    height: 28px;
    margin-left: 14px;
    padding-bottom: 2px;
    gap: 8px;
    border: 1px solid #b5b5b5;
    border-top: none;
    border-radius: 0 0 2px 2px;
    background-color: #fff;
    font-size: 14px;
    font-family: Roboto, "Noto Sans CJK TC", sans-serif;
    color: #222;
}

.sheet-bar .explore {
    width: 18px;
    margin-left: auto;
}

.sheet-bar .explore svg {
    width: 18px;
    height: 21px;
    margin-top: 4px;
}

/* side panel */
.side-panel {
    flex: none;
    display: flex;
    flex-direction: column;
    align-items: center;
    gap: 38px;
    width: 56px;
    padding: 19px 0 22px;
    border-left: 1px solid #dadce0;
}

.side-panel svg {
    width: 18px;
    height: 18px;
}

.side-panel .panel-toggle {
    margin-top: auto;
}

.side-panel .panel-toggle svg {
    width: 12px;
    height: 12px;
}

/* taskbar */
.taskbar {
    flex: none;
    display: flex;
    height: 40px;
    background-color: #060c14;
    color: #fff;
}

.system,
.programs,
.tray {
    display: flex;
}

.system button,
.programs button {
    width: 48px;
}

.programs {
    gap: 1px;
    margin-left: 3px;
}

.programs svg {
    width: 24px;
    height: 24px;
}

.s16 {
    width: 16px;
    height: 16px;
}

.programs .running {
    position: relative;
}

.running::after {
    content: "";
    position: absolute;
    left: 4px;
    right: 4px;
    bottom: 0;
    height: 2px;
    background-color: #76b9ed;
}

.programs .current {
    background-color: #3b3e44;
}

.current::after {
    left: 0;
    right: 0;
}

.blue-user {
    color: #2ba3dc;
}

.tray {
    margin-left: auto;
}

.tray button {
    width: 24px;
}

.tray svg {
    width: 14px;
    height: 14px;
}

.tray .s16 {
    width: 16px;
    height: 16px;
}

.tray .people {
    margin-right: 12px;
}

.clock {
    display: flex;
    flex-direction: column;
    justify-content: center;
    width: 69px;
    line-height: 18px;
    text-align: center;
}

.tray .notify {
    position: relative;
    width: 44px;
}

.badge {
    position: absolute;
    right: 6px;
    bottom: 5px;
    width: 17px;
    height: 17px;
    border: 1px solid #888;
    border-radius: 50%;
    background-color: #26292e;
    font-size: 12px;
    line-height: 15px;
}

.show-desktop {
    width: 5px;
    margin-left: 6px;
    border-left: 1px solid #666;
}
```
